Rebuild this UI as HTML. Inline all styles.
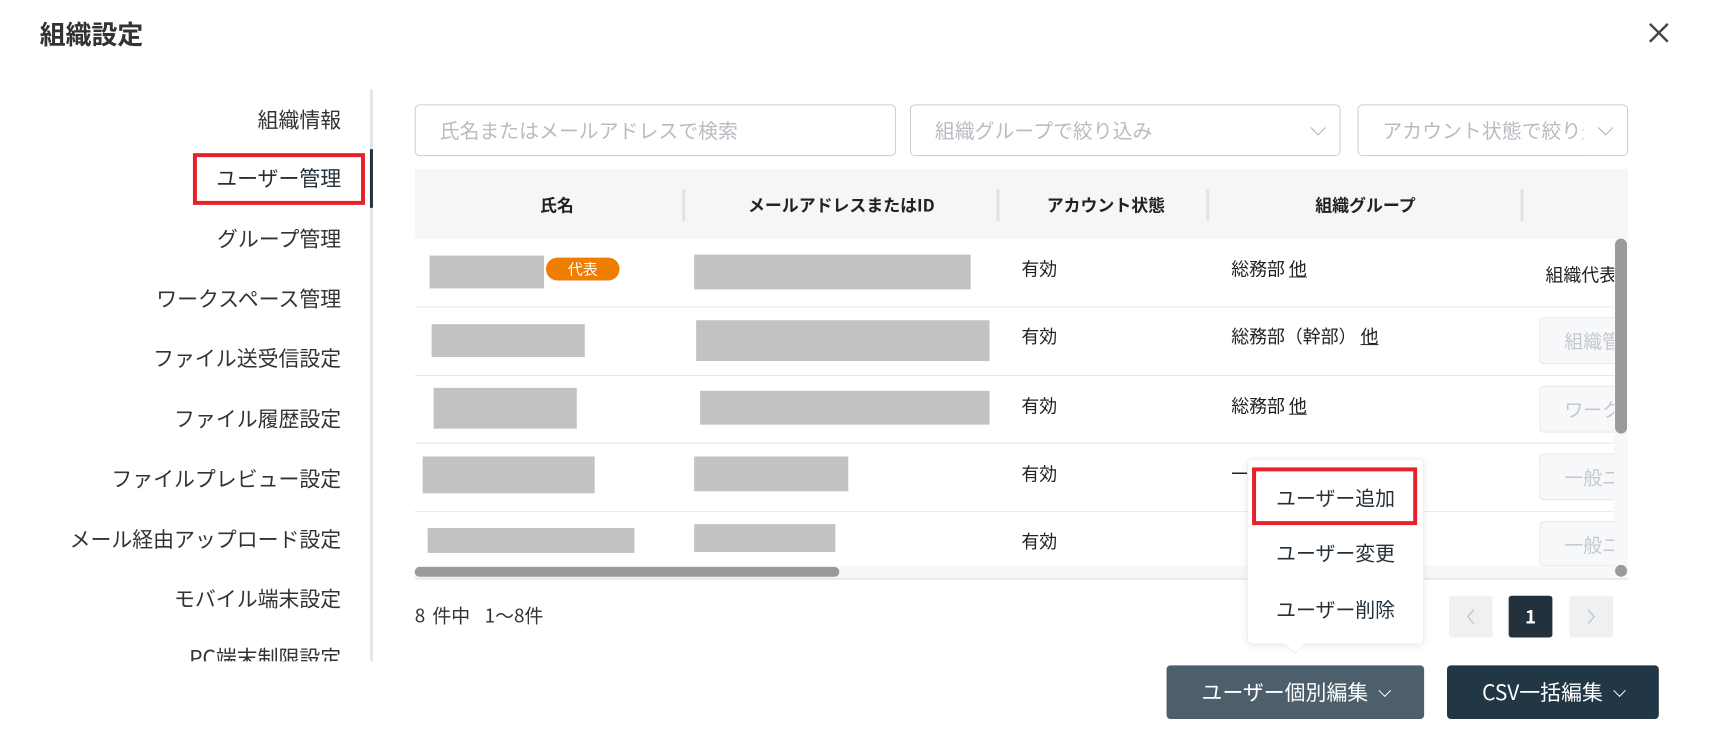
<!DOCTYPE html>
<html><head><meta charset="utf-8"><style>
*{box-sizing:border-box;margin:0;padding:0}
body{width:1714px;height:736px;background:#fff;font-family:"Noto Sans CJK JP","Liberation Sans",sans-serif;color:#222;position:relative;overflow:hidden}
#w{position:absolute;left:0;top:0;width:1724px;height:740px;transform:scale(0.9945);transform-origin:0 0}
.a{position:absolute}
.side{position:absolute;right:calc(1724px - 343px);font-size:21px;color:#333;white-space:nowrap;line-height:26px}
.g{position:absolute;background:#c2c2c2}
.inp{position:absolute;border:1px solid #c9ccd0;border-radius:5px;height:52px;top:105px;color:#b8bcc2;font-size:20px;line-height:50px;padding-left:24px;white-space:nowrap;overflow:hidden}
.chev{position:absolute;right:16px;top:17px;width:11px;height:11px;border-right:1.5px solid #aab;border-bottom:1.5px solid #aab;transform:rotate(45deg)}
.th{position:absolute;top:205px;transform:translate(-50%,-50%);font-size:17px;font-weight:bold;color:#222;white-space:nowrap}
.sep{position:absolute;top:190px;width:3px;height:32px;background:#dde3ea}
.rl{position:absolute;left:417px;width:1206px;height:1px;background:#e3e6ea}
.t{position:absolute;font-size:18px;transform:translateY(-50%);white-space:nowrap}
.btn5{position:absolute;left:1548px;width:80px;height:47px;border:1px solid #e6e8ec;border-radius:4px;background:#f7f8fa;color:#c4c8ce;font-size:19px;line-height:45px;padding-left:24px;overflow:hidden;white-space:nowrap}
.pg{position:absolute;top:599px;width:44px;height:42px;border-radius:3px;background:#eef0f2}
.pg svg{position:absolute;left:16px;top:13px}
.mi{position:absolute;left:1254px;width:178px;text-align:center;font-size:20px;color:#23313d;transform:translateY(-50%)}
.bt{position:absolute;top:669px;height:54px;border-radius:4px;color:#fff;font-size:21px;line-height:54px;text-align:center}
.bt span{display:inline-block;width:9px;height:9px;border-right:1.5px solid #fff;border-bottom:1.5px solid #fff;transform:rotate(45deg);margin:0 0 5px 12px}
</style></head><body><div id="w">
<div class="a" style="left:40px;top:16px;font-size:26px;font-weight:bold;color:#333;line-height:36px">組織設定</div>
<svg class="a" style="left:1657px;top:22px" width="22" height="22"><path d="M2 2L20 20M20 2L2 20" stroke="#444" stroke-width="2.4"/></svg>

<div class="a" style="left:372px;top:90px;width:3px;height:575px;background:#e3e6ec"></div>
<div class="a" style="left:372px;top:150px;width:3px;height:59px;background:#23313d"></div>
<div class="side" style="top:107px">組織情報</div>
<div class="side" style="top:166px;color:#23313d">ユーザー管理</div>
<div class="side" style="top:227px">グループ管理</div>
<div class="side" style="top:287px">ワークスペース管理</div>
<div class="side" style="top:347px">ファイル送受信設定</div>
<div class="side" style="top:408px">ファイル履歴設定</div>
<div class="side" style="top:468px">ファイルプレビュー設定</div>
<div class="side" style="top:529px">メール経由アップロード設定</div>
<div class="side" style="top:589px">モバイル端末設定</div>
<div class="side" style="top:648px">PC端末制限設定</div>
<div class="a" style="left:0;top:665px;width:372px;height:75px;background:#fff"></div>
<div class="a" style="left:194px;top:154px;width:173px;height:52px;border:4px solid #e8202a"></div>

<div class="inp" style="left:417px;width:484px">氏名またはメールアドレスで検索</div>
<div class="inp" style="left:915px;width:433px">組織グループで絞り込み<div class="chev"></div></div>
<div class="inp" style="left:1365px;width:272px">アカウント状態で絞り込み<div class="a" style="right:0;top:0;width:44px;height:50px;background:#fff"></div><div class="chev"></div></div>

<div class="a" style="left:417px;top:170px;width:1220px;height:70px;background:#f6f6f6"></div>
<div class="th" style="left:560px">氏名</div>
<div class="th" style="left:846px">メールアドレスまたはID</div>
<div class="th" style="left:1112px">アカウント状態</div>
<div class="th" style="left:1373px">組織グループ</div>
<div class="sep" style="left:686px"></div><div class="sep" style="left:1002px"></div><div class="sep" style="left:1213px"></div><div class="sep" style="left:1529px"></div>
<div class="rl" style="top:308px"></div><div class="rl" style="top:377px"></div><div class="rl" style="top:445px"></div><div class="rl" style="top:514px"></div>

<div class="g" style="left:432px;top:257px;width:115px;height:33px"></div>
<div class="a" style="left:549px;top:259px;width:74px;height:23px;border-radius:12px;background:#ef7d00;color:#fff;font-size:15px;text-align:center;line-height:23px">代表</div>
<div class="g" style="left:698px;top:256px;width:278px;height:35px"></div>
<div class="g" style="left:434px;top:326px;width:154px;height:33px"></div>
<div class="g" style="left:700px;top:322px;width:295px;height:41px"></div>
<div class="g" style="left:436px;top:390px;width:144px;height:41px"></div>
<div class="g" style="left:704px;top:393px;width:291px;height:34px"></div>
<div class="g" style="left:425px;top:459px;width:173px;height:37px"></div>
<div class="g" style="left:698px;top:459px;width:155px;height:35px"></div>
<div class="g" style="left:430px;top:531px;width:208px;height:25px"></div>
<div class="g" style="left:698px;top:527px;width:142px;height:28px"></div>

<div class="t" style="left:1027px;top:270px">有効</div>
<div class="t" style="left:1027px;top:338px">有効</div>
<div class="t" style="left:1027px;top:408px">有効</div>
<div class="t" style="left:1027px;top:476px">有効</div>
<div class="t" style="left:1027px;top:544px">有効</div>
<div class="t" style="left:1238px;top:270px">総務部 <u>他</u></div>
<div class="t" style="left:1238px;top:338px">総務部（幹部） <u>他</u></div>
<div class="t" style="left:1238px;top:408px">総務部 <u>他</u></div>
<div class="t" style="left:1238px;top:476px">一</div>
<div class="t" style="left:1554px;top:276px;width:70px;overflow:hidden">組織代表</div>
<div class="btn5" style="top:319px">組織管理</div>
<div class="btn5" style="top:388px">ワークスペース</div>
<div class="btn5" style="top:456px">一般ユーザー</div>
<div class="btn5" style="top:524px;height:45px">一般ユーザー</div>

<div class="a" style="left:1623px;top:240px;width:14px;height:339px;background:#f8f8f8"></div>
<div class="a" style="left:1624px;top:240px;width:12px;height:196px;border-radius:6px;background:#9a9a9a"></div>
<div class="a" style="left:1624px;top:568px;width:12px;height:12px;border-radius:6px;background:#9a9a9a"></div>
<div class="a" style="left:417px;top:569px;width:1206px;height:12px;background:#f8f8f8"></div>
<div class="a" style="left:417px;top:570px;width:427px;height:10px;border-radius:5px;background:#9a9a9a"></div>
<div class="a" style="left:417px;top:581px;width:1220px;height:2px;background:#e6e9ee"></div>

<div class="a" style="left:417px;top:605px;font-size:19px;color:#333;word-spacing:3px">8 件中&nbsp;&nbsp;1～8件</div>
<div class="pg" style="left:1457px"><svg width="12" height="16"><path d="M9 1L3 8L9 15" stroke="#c4c8cc" stroke-width="1.5" fill="none"/></svg></div>
<div class="pg" style="left:1517px;background:#23313d;color:#fff;font-weight:bold;font-size:19px;text-align:center;line-height:42px">1</div>
<div class="pg" style="left:1578px"><svg width="12" height="16"><path d="M3 1L9 8L3 15" stroke="#c4c8cc" stroke-width="1.5" fill="none"/></svg></div>

<div class="a" style="left:1254px;top:461px;width:178px;height:187px;background:#fff;border:1px solid #eceef1;border-radius:5px;box-shadow:0 2px 8px rgba(0,0,0,.08)"></div>
<div class="a" style="left:1295px;top:641px;width:14px;height:14px;background:#fff;transform:rotate(45deg);border-right:1px solid #eceef1;border-bottom:1px solid #eceef1"></div>
<div class="a" style="left:1259px;top:470px;width:166px;height:58px;border:4px solid #e8202a"></div>
<div class="mi" style="top:500px">ユーザー追加</div>
<div class="mi" style="top:555px">ユーザー変更</div>
<div class="mi" style="top:612px">ユーザー削除</div>

<div class="bt" style="left:1173px;width:259px;background:#4d5f6b">ユーザー個別編集<span></span></div>
<div class="bt" style="left:1455px;width:213px;background:#213745">CSV一括編集<span></span></div>
</div></body></html>
